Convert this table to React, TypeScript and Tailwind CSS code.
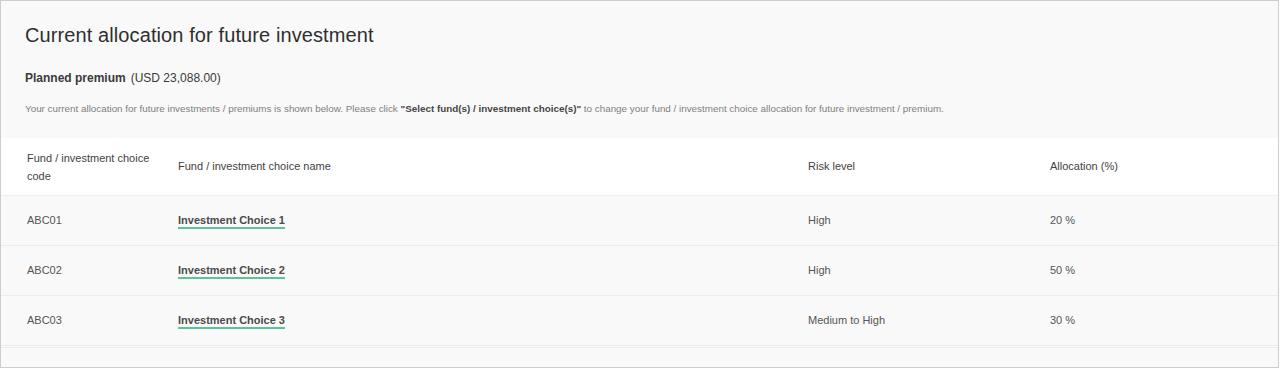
const rows = [
  { code: "ABC01", name: "Investment Choice 1", risk: "High", alloc: "20 %" },
  { code: "ABC02", name: "Investment Choice 2", risk: "High", alloc: "50 %" },
  { code: "ABC03", name: "Investment Choice 3", risk: "Medium to High", alloc: "30 %" },
];

export default function App() {
  return (
    <div className="h-[369px] w-[1280px] overflow-hidden bg-white font-['Liberation_Sans',Arial,sans-serif]">
      <div className="flex h-[368px] w-[1279px] flex-col border border-[#cdcdcd] bg-[#f9f9f9]">
        <div className="px-[24px] pt-[22px]">
          <h1 className="text-[20px] leading-[24px] tracking-[0.1px] text-[#2f2f2f]">
            Current allocation for future investment
          </h1>
          <div className="mt-[23px] text-[12px] leading-[16px] text-[#3a3a3a]">
            <span className="font-bold">Planned premium</span>
            <span className="ml-[5px]">(USD 23,088.00)</span>
          </div>
          <p className="mt-[16px] text-[9.85px] leading-[14px] text-[#808080]">
            Your current allocation for future investments / premiums is shown below. Please click{" "}
            <span className="font-bold text-[#444]">"Select fund(s) / investment choice(s)"</span> to change your fund
            / investment choice allocation for future investment / premium.
          </p>
        </div>

        <div className="mt-[22px] text-[11px] text-[#555]">
          <div className="grid h-[58px] grid-cols-[151px_630px_242px_1fr] items-center border-b border-[#efefef] bg-white pl-[26px] text-[#3f3f3f]">
            <div className="leading-[18px]">
              Fund / investment choice
              <br />
              code
            </div>
            <div>Fund / investment choice name</div>
            <div>Risk level</div>
            <div>Allocation (%)</div>
          </div>
          {rows.map((r) => (
            <div
              key={r.code}
              className="grid h-[50px] grid-cols-[151px_630px_242px_1fr] items-center border-b border-[#ececec] pl-[26px]"
            >
              <div>{r.code}</div>
              <div>
                <span className="border-b-2 border-[#5cc29a] pb-[1px] text-[11px] font-bold text-[#4a4a4a]">{r.name}</span>
              </div>
              <div>{r.risk}</div>
              <div>{r.alloc}</div>
            </div>
          ))}
          <div className="mt-[1px] border-b border-[#ececec]" />
        </div>
      </div>
    </div>
  );
}
